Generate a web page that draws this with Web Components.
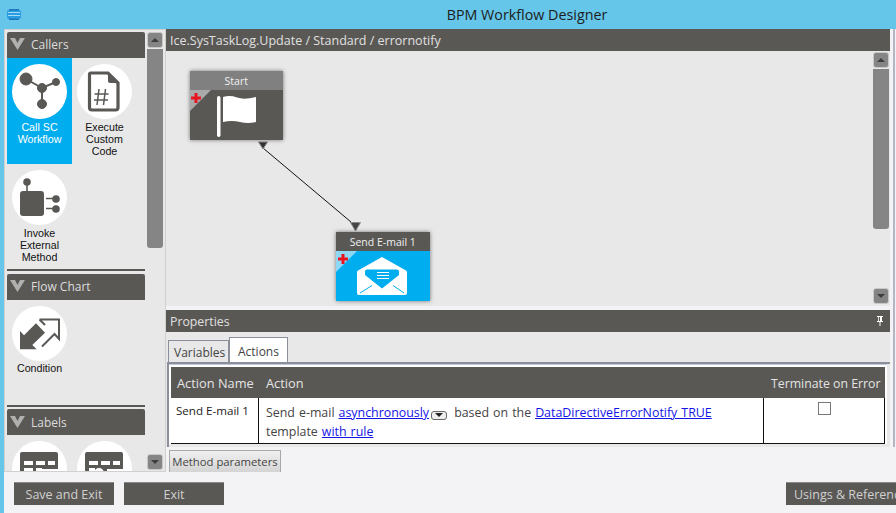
<!DOCTYPE html>
<html lang="en"><head><meta charset="utf-8"><title>BPM Workflow Designer</title>
<style>
html,body{margin:0;padding:0;width:896px;height:513px;overflow:hidden;background:#f3f3f5;font-family:"Open Sans","Liberation Sans",sans-serif;}
svg{display:block}
a{color:#1414e6}
</style></head><body>
<wf-app>
  <wf-titlebar slot="top" label="BPM Workflow Designer"></wf-titlebar>
  <wf-palette slot="left">
    <wf-section label="Callers" style="--tiles:211px;--after:3px">
      <wf-tile label="Call SC Workflow" selected>
        <svg viewBox="0 0 55 55" width="55" height="55" fill="#5a5855" stroke="#5a5855"><path d="M14 15L30 24L44 18M30 24V40" stroke-width="2" fill="none"/><circle cx="14" cy="15" r="6"/><circle cx="30" cy="24" r="4.5"/><circle cx="44" cy="18" r="3.5"/><circle cx="30" cy="40" r="4.5"/></svg>
      </wf-tile>
      <wf-tile label="Execute Custom Code">
        <svg viewBox="0 0 55 55" width="55" height="55"><path d="M13 9H31L41 19V43.500Q41 46 38.500 46H15Q12.500 46 12.500 43.500V10.500Q12.500 9 14 9Z" fill="none" stroke="#5a5855" stroke-width="3.200"/><path d="M31 8L42 19H33Q31 19 31 17Z" fill="#5a5855"/><path d="M22 25L20 41M28.500 25L26.500 41M17.500 30H31.500M17 36H31" stroke="#5a5855" stroke-width="1.500" fill="none"/></svg>
      </wf-tile>
      <wf-tile label="Invoke External Method">
        <svg viewBox="0 0 55 55" width="55" height="55" fill="#5a5855"><rect x="8" y="21" width="24" height="25" rx="3"/><circle cx="15" cy="12" r="3.800"/><path d="M14.200 12h1.600v10h-1.600zM34 27.800h8v1.400h-8zM34 37.800h8v1.400h-8z"/><circle cx="44" cy="29" r="3.800"/><circle cx="44" cy="39" r="3.800"/></svg>
      </wf-tile>
    </wf-section>
    <wf-section label="Flow Chart" style="--tiles:105px;--after:2px;--lbl:1px">
      <wf-tile label="Condition">
        <svg viewBox="0 0 55 55" width="55" height="55"><path d="M8 25V43.300H24.700L20.300 39L33 26.700L24 17.300L12 29.300Z" fill="#5a5855"/><path d="M27.500 13.500H47V33L42.500 28L30 40.500M27.500 13.500L33 19" fill="none" stroke="#5a5855" stroke-width="2"/></svg>
      </wf-tile>
    </wf-section>
    <wf-section label="Labels" style="--tiles:106px;--after:0px;--hp:0px">
      <wf-tile label="">
        <svg viewBox="0 0 55 55" width="55" height="55"><path d="M8 13Q8 11 10 11H44Q46 11 46 13V42H8Z" fill="#5a5855"/><path d="M12 20h9v4h-9zM24 20h9v4h-9zM36 20h7v4h-7zM12 27h9v4h-9zM24 27h6v4h-6z" fill="#fff"/><path d="M30 28h18v14H30z" fill="#fff"/><path d="M32 30h16v2H32z" fill="#5a5855"/></svg>
      </wf-tile>
      <wf-tile label="">
        <svg viewBox="0 0 55 55" width="55" height="55"><path d="M8 13Q8 11 10 11H44Q46 11 46 13V42H8Z" fill="#5a5855"/><path d="M12 20h9v4h-9zM24 20h9v4h-9zM36 20h7v4h-7zM12 27h6v4h-6z" fill="#fff"/><circle cx="22" cy="32" r="5" fill="#fff"/><path d="M30 28h18v14H30z" fill="#fff"/><path d="M32 30h16v2H32z" fill="#5a5855"/></svg>
      </wf-tile>
    </wf-section>
  </wf-palette>
  <wf-pane slot="right">
    <wf-head slot="crumb" label="Ice.SysTaskLog.Update / Standard / errornotify" style="font-size:12.500px"></wf-head>
    <wf-canvas slot="canvas">
      <svg style="position:absolute;left:0;top:0" width="707" height="255" viewBox="0 0 707 255"><path d="M97 97L185 171" stroke="#111" stroke-width="1" fill="none"/>
        <path d="M92.500 91H101.500L97 98Z" fill="#333" stroke="#888"/><path d="M184.500 171.500H194.500L189.500 180Z" fill="#444" stroke="#888"/></svg>
      <wf-node style="left:23.500px;top:20px" label="Start" head="#808080" body="#5a5855" corner="#a9a9a9">
        <svg viewBox="0 0 46 41" width="46" height="41" fill="#fff"><rect x="4" y="0" width="3.500" height="41" rx="1.700"/><path d="M10 1Q17 -1 24 1.500T43 1V26Q35 28 27 26T10 26Z"/></svg>
      </wf-node>
      <wf-node style="left:170px;top:181px" label="Send E-mail 1" head="#5a5855" body="#00adef" corner="#8fd8f5">
        <svg viewBox="0 0 50 38" width="50" height="38"><path d="M25 0L49 13.500Q50 14 50 15.500V36Q50 38 48 38H2Q0 38 0 36V15.500Q0 14 1 13.500Z" fill="#fff"/><path d="M10 12.500H40Q42 12.500 42 14.500V18L25 31.500L8 18V14.500Q8 12.500 10 12.500Z" fill="#00adef"/><path d="M20 15.500H32M20 18.500H32M20 21.500H32" stroke="#fff" stroke-width="1.100"/><path d="M3 36L15 28.500M47 36L36 28.500" stroke="#00adef" stroke-width="1"/></svg>
      </wf-node>
      <wf-scroll style="position:absolute;left:707px;top:1px;height:252px" thumb="160" ></wf-scroll>
    </wf-canvas>
    <wf-head slot="propshead" label="Properties" pin style="font-size:12.300px"></wf-head>
    <wf-props slot="props">
      <wf-tab slot="tabs">Variables</wf-tab>
      <wf-tab slot="tabs" active>Actions</wf-tab>
      <wf-actions slot="body">
        <span slot="name">Send E-mail 1</span>
        <span slot="desc">Send e-mail <a href="#">asynchronously</a> <wf-drop></wf-drop> based on the <a href="#">DataDirectiveErrorNotify TRUE</a><br>template <a href="#">with rule</a></span>
      </wf-actions>
    </wf-props>
    <wf-subtab slot="sub">Method parameters</wf-subtab>
  </wf-pane>
  <wf-foot slot="foot">
    <wf-btn>Save and Exit</wf-btn>
    <wf-btn>Exit</wf-btn>
    <wf-btn slot="end" style="width:140px;justify-content:flex-start;padding-left:8px">Usings &amp; References</wf-btn>
  </wf-foot>
</wf-app>
<script>
function def(name, html, init){
  customElements.define(name, class extends HTMLElement{
    constructor(){super();this.attachShadow({mode:'open'});}
    connectedCallback(){
      if(this.shadowRoot.firstChild)return;
      const a=n=>this.getAttribute(n)||'';
      this.shadowRoot.innerHTML=html(a,this);
    }
  });
}
const SEGOE='"Open Sans","Liberation Sans",sans-serif';
def('wf-app',()=>`<style>
:host{display:flex;flex-direction:column;width:896px;height:513px;overflow:hidden;background:#f3f3f5}
.row{display:flex;flex:none;height:443px}
.wrap{flex:1;display:flex;flex-direction:column;border-left:4px solid #65c6ea;min-height:0}
</style><slot name="top"></slot><div class="wrap"><div class="row"><slot name="left"></slot><slot name="right"></slot></div><slot name="foot"></slot></div>`);
def('wf-titlebar',a=>`<style>
:host{display:flex;flex:none;height:29px;background:#65c6ea;align-items:center;padding-left:7px;position:relative}
.t{position:absolute;left:0;right:0;padding-left:158px;text-align:center;font:14.300px ${SEGOE};color:#1c1c1c}
</style><svg viewBox="0 0 14 11" width="14" height="11" style="display:block"><rect x="0" y="1" width="14" height="9" rx="2" fill="#2a9ce0"/><path d="M1 3.500H13M1 6.500H13" stroke="#a5dcf7" stroke-width="1"/><rect x="2" y="0" width="10" height="1.500" fill="#1a78bb"/><rect x="2" y="9.500" width="10" height="1.500" fill="#1a78bb"/></svg><div class="t">${a('label')}</div>`);
def('wf-palette',()=>`<style>
:host{display:flex;width:162px;height:443px;box-sizing:border-box;border:1px solid #d0d0d0;background:#e8e8e8;flex:none}
.list{width:141px;height:441px;overflow:hidden;padding-top:2px;box-sizing:border-box;flex:none}
.sb{padding:2px 0 0 1px}
</style><div class="list"><slot></slot></div><div class="sb"><wf-scroll thumb="199" style="height:438px"></wf-scroll></div>`);
def('wf-scroll',(a)=>`<style>
:host{display:flex;flex-direction:column;width:16px;background:#e8e8e8;flex:none}
.b{height:16px;background:#858585;border-radius:3px;display:flex;align-items:center;justify-content:center;flex:none;box-sizing:border-box;border:1px solid #c8c8c8}
.th{height:${a('thumb')}px;background:#858585;margin-top:1px;border-radius:0 0 3px 3px;flex:none}
.sp{flex:1}
i{width:0;height:0;border:4.500px solid transparent;border-top:0;border-bottom:4.500px solid #3d3d3d}
i.d{border-bottom:0;border-top:4.500px solid #3d3d3d}
</style><div class="b"><i></i></div><div class="th"></div><div class="sp"></div><div class="b"><i class="d"></i></div>`);
def('wf-section',a=>`<style>
:host{display:block;margin-left:2px;width:138px;margin-bottom:var(--after,2px)}
.h{height:26px;background:#5a5855;display:flex;align-items:center;gap:6px;padding:0 0 var(--hp,2px) 3px;box-sizing:border-box;border-radius:2px 2px 0 0;font:12px ${SEGOE};color:#dcdcdc}
.g{display:grid;grid-template-columns:65px 65px;grid-auto-rows:106px;align-content:start;height:var(--tiles,106px);border-bottom:2px solid #5a5855}
</style><div class="h"><svg viewBox="0 0 15 12" width="15" height="12" style="display:block"><path d="M0 0H5L7.500 5L10 0H15L7.500 12Z" fill="#b0b0ae"/></svg><span>${a('label')}</span></div><div class="g"><slot></slot></div>`);
def('wf-tile',(a,el)=>`<style>
:host{display:flex;flex-direction:column;align-items:center;padding-top:6px;box-sizing:border-box;height:106px;width:65px;font:10.700px/12px "Liberation Sans",sans-serif;color:#111;text-align:center}
:host([selected]){background:#00adef;color:#fff}
.c{width:55px;height:55px;border-radius:50%;background:#fff;flex:none;overflow:hidden}
.l{margin-top:calc(2px - var(--lbl,0px));width:58px}
</style><div class="c"><slot></slot></div><div class="l">${a('label')}</div>`);
def('wf-pane',()=>`<style>
:host{display:flex;flex-direction:column;flex:none;width:726px;height:443px}
.box{display:flex;flex-direction:column;height:418px;box-sizing:border-box;border-right:2px solid #b4b6c6;width:729px;padding-right:3px;flex:none}
.gap{height:4px;flex:none}
</style><div class="box"><slot name="crumb"></slot><slot name="canvas"></slot><div class="gap"></div><slot name="propshead"></slot><slot name="props"></slot></div><slot name="sub"></slot>`);
def('wf-head',(a,el)=>`<style>
:host{display:flex;height:22px;flex:none;background:#5a5855;align-items:center;padding:0 7px 0 4px;font:12px ${SEGOE};color:#e0e0e0;justify-content:space-between}
</style><span>${a('label')}</span>${el.hasAttribute('pin')?`<svg viewBox="0 0 6 10" width="6" height="10" style="display:block"><path d="M0 0H6V1H5V5H6V6H3.500V10H2.500V6H0V5H1V1H0Z" fill="#fff"/><rect x="1.800" y="1" width="1.200" height="4" fill="#5a5855"/></svg>`:''}`);
def('wf-canvas',()=>`<style>
:host{display:block;position:relative;height:255px;flex:none;background:#e8e8e8;overflow:hidden}
</style><slot></slot>`);
def('wf-node',a=>`<style>
:host{display:block;position:absolute;width:93.500px;height:69px;box-shadow:0 0 4px rgba(0,0,0,.5);background:${a('body')}}
.h{height:19px;background:${a('head')};text-align:center;font:10.500px/20px ${SEGOE};color:#f0f0f0}
.b{position:relative;height:50px}
.c{position:absolute;left:0;top:0;width:0;height:0;border-top:21px solid ${a('corner')};border-right:21px solid transparent}
.p{position:absolute;left:1.500px;top:3px}
.i{position:absolute}
</style><div class="h">${a('label')}</div><div class="b"><div class="c"></div><svg class="p" width="10" height="10" viewBox="0 0 10 10"><path d="M3.500 0h3v3.500H10v3H6.500V10h-3V6.500H0v-3h3.500z" fill="#e8141e"/></svg><div class="i" style="${a('label')==='Start'?'left:23px;top:6px':'left:21px;top:6px'}"><slot></slot></div></div>`);
def('wf-props',()=>`<style>
:host{display:flex;flex-direction:column;flex:1;background:#e8e8e8;padding-top:6px;box-sizing:border-box;min-height:0}
.tabs{display:flex;align-items:flex-end;height:24px;padding-left:2px;flex:none}
.body{border-top:2px solid #8a8f9a;border-left:2px solid #8a8f9a;margin-left:1px;flex:1;min-height:0}
.inner{background:#fff;margin-right:3px;padding:3px 0 0 2px;box-shadow:inset 0 1px 0 #c4c8dc}
</style><div class="tabs"><slot name="tabs"></slot></div><div class="body"><div class="inner"><slot name="body"></slot></div></div>`);
def('wf-tab',()=>`<style>
:host{display:block;box-sizing:border-box;width:61px;flex:none;height:22px;padding:0 0 0 5px;border:1px solid #8a8f9a;border-bottom:0;font:12px/23px ${SEGOE};color:#444;background:#e8e8e8;white-space:nowrap;overflow:hidden}
:host([active]){background:#fff;width:59px;height:25px;padding:0 0 0 8px;line-height:28px}
</style><slot></slot>`);
def('wf-actions',()=>`<style>
:host{display:grid;grid-template-columns:88px 505px 121px;grid-template-rows:31px 46px;width:714px;font:12.400px/19px ${SEGOE};color:#444;box-sizing:border-box}
.th{background:#5a5855;color:#e4e4e4;font-size:12.800px;display:flex;align-items:center;padding:1px 0 0 6px;box-sizing:border-box;white-space:nowrap}
.th.a{padding-left:7px}
.th.t{font-size:12.300px;padding-left:7px}
.td{background:#fff;border-bottom:1px solid #111;border-right:1px solid #111;box-sizing:border-box}
.n{color:#222;padding:3px 0 0 5px;font-size:11.600px}
.d{padding:5px 0 0 7px;word-spacing:.8px}
.k{display:flex;justify-content:center;padding:4px 0 0 1px}
.b{width:13px;height:13px;border:1px solid #777;background:#fff;box-sizing:border-box}
</style><div class="th">Action Name</div><div class="th a">Action</div><div class="th t">Terminate on Error</div>
<div class="td n"><slot name="name"></slot></div><div class="td d"><slot name="desc"></slot></div><div class="td k"><div class="b"></div></div>`);
def('wf-drop',()=>`<style>
:host{display:inline-flex;align-items:center;justify-content:center;width:16px;height:9px;border:1px solid #666;border-radius:3px;background:#eee;box-sizing:border-box;vertical-align:0;margin:0 3px 0 -2px}
i{width:0;height:0;border:4px solid transparent;border-bottom:0;border-top:4px solid #222}
</style><i></i>`);
def('wf-subtab',()=>`<style>
:host{display:block;flex:none;width:112px;box-sizing:border-box;height:22px;margin:3px 0 0 3px;border:1px solid #a8a8a8;border-bottom:0;background:linear-gradient(#f0f0f0,#d4d4d4);font:11.300px/21px ${SEGOE};color:#444;text-align:center;white-space:nowrap;overflow:hidden}
</style><slot></slot>`);
def('wf-foot',()=>`<style>
:host{display:flex;flex:none;height:41px;padding:10px 0 0 10px;box-sizing:border-box;gap:10px;align-items:flex-start;overflow:hidden}
.s{flex:1}
</style><slot></slot><div class="s"></div><slot name="end"></slot>`);
def('wf-btn',()=>`<style>
:host{display:flex;width:100px;height:23px;flex:none;box-sizing:border-box;align-items:center;justify-content:center;background:#5a5855;border-top:1px solid #8a8a88;font:12.500px ${SEGOE};color:#d0d0d0;white-space:nowrap}
:host([slot=end]){margin-right:-30px}
</style><slot></slot>`);
</script>
</body></html>
